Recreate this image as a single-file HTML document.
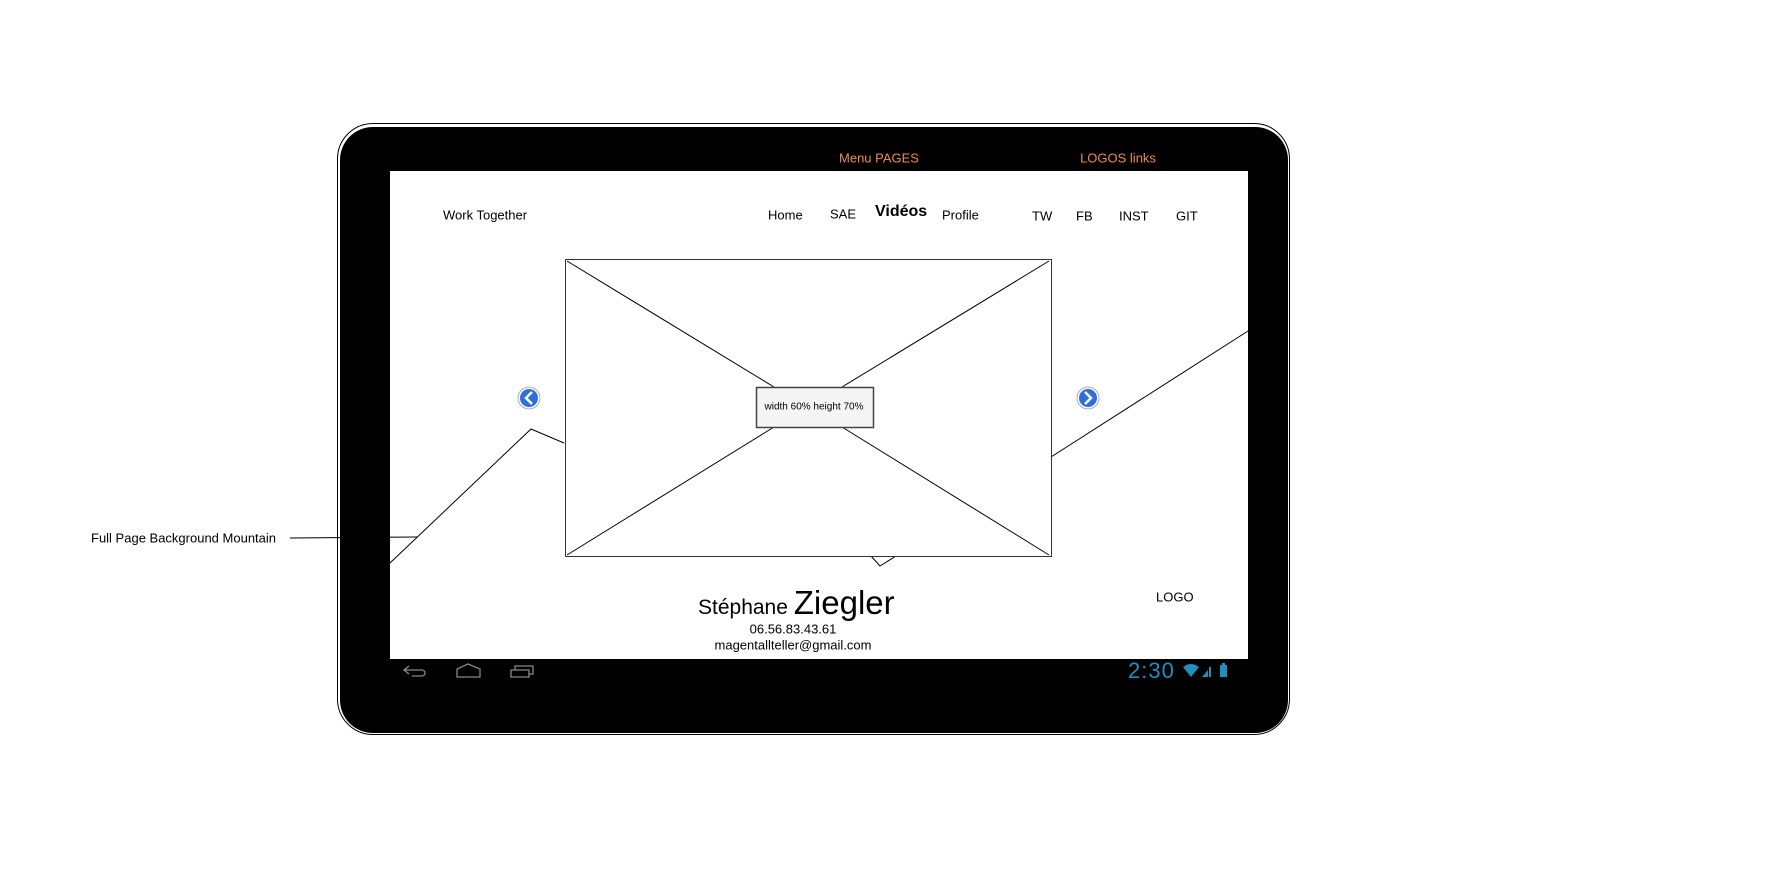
<!DOCTYPE html>
<html><head><meta charset="utf-8"><style>
body{margin:0;width:1790px;height:892px;background:#fff;position:relative;overflow:hidden;font-family:"Liberation Sans",sans-serif;}
.t{position:absolute;white-space:nowrap;font-size:13px;color:#000;transform:translateY(-50%);}
.c{transform:translate(-50%,-50%);}
</style></head><body>
<div style="position:absolute;left:337px;top:123px;width:951px;height:610px;border:1px solid #000;border-radius:36px;"></div>
<div style="position:absolute;left:340px;top:127px;width:948px;height:606px;background:#000;border-radius:33px;"></div>
<div style="position:absolute;left:390px;top:171px;width:858px;height:488px;background:#fff;"></div>
<svg width="1790" height="892" style="position:absolute;left:0;top:0">
<g fill="none" stroke="#000" stroke-width="1">
<polyline points="390,563 531,429 564,443"/>
<polyline points="1051,457 1248,331"/>
<polyline points="871,556 880,566 896,556"/>
<polyline points="290,538 417,537"/>
<rect x="565.5" y="259.5" width="486" height="297" fill="#fff" stroke="#333"/>
<line x1="567" y1="261" x2="774" y2="387"/>
<line x1="1049" y1="261" x2="842" y2="387"/>
<line x1="567" y1="555" x2="774" y2="427"/>
<line x1="1049" y1="555" x2="842" y2="427"/>
<rect x="756.5" y="387.5" width="117" height="40" fill="#f5f5f5" stroke="#444" stroke-width="1.5"/>
</g>
<g>
<circle cx="529" cy="398" r="11" fill="#fff" stroke="#aac" />
<circle cx="529" cy="398" r="9" fill="#2f6fd8"/>
<path d="M532,392 L526,398 L532,404" fill="none" stroke="#fff" stroke-width="2.5"/>
<circle cx="1088" cy="398" r="11" fill="#fff" stroke="#aac"/>
<circle cx="1088" cy="398" r="9" fill="#2f6fd8"/>
<path d="M1085,392 L1091,398 L1085,404" fill="none" stroke="#fff" stroke-width="2.5"/>
</g>
<g fill="none" stroke="#888" stroke-width="1.3">
<path d="M409,666 L404,670 L409,674 M404,670 L421,670 Q425,670 425,673 Q425,676 421,676 L412,676"/>
<path d="M457,677 L457,669 L468,664 L480,669 L480,677 Z"/>
<path d="M511,670 L529,670 L529,677 L511,677 Z M515,670 L515,666 L533,666 L533,674 L529,674"/>
</g>
<g fill="#1f8fbf">
<path d="M1183,667 Q1191,661 1199,667 L1191,677 Z"/>
<path d="M1202,677 L1208,670 L1208,677 Z"/>
<rect x="1209" y="667" width="2" height="10"/>
<rect x="1220" y="665" width="7" height="12"/><rect x="1222" y="663" width="3" height="2"/>
</g>
</svg>
<div class="t c" style="left:879px;top:158px;color:#f08a4b;">Menu PAGES</div>
<div class="t c" style="left:1118px;top:158px;color:#f08a4b;">LOGOS links</div>
<div class="t" style="left:443px;top:215px;">Work Together</div>
<div class="t" style="left:768px;top:215px;">Home</div>
<div class="t" style="left:830px;top:214px;">SAE</div>
<div class="t" style="left:875px;top:212px;font-size:16px;font-weight:bold;">Vidéos</div>
<div class="t" style="left:942px;top:215px;">Profile</div>
<div class="t" style="left:1032px;top:216px;">TW</div>
<div class="t" style="left:1076px;top:216px;">FB</div>
<div class="t" style="left:1119px;top:216px;">INST</div>
<div class="t" style="left:1176px;top:216px;">GIT</div>
<div class="t c" style="left:814px;top:407px;font-size:10px;">width 60% height 70%</div>
<div class="t" style="left:91px;top:538px;">Full Page Background Mountain</div>
<div class="t" style="left:698px;top:603px;font-size:21px;">Stéphane <span style="font-size:33px;">Ziegler</span></div>
<div class="t c" style="left:793px;top:629px;">06.56.83.43.61</div>
<div class="t c" style="left:793px;top:645px;">magentallteller@gmail.com</div>
<div class="t" style="left:1156px;top:597px;">LOGO</div>
<div class="t" style="left:1128px;top:671px;font-size:22px;color:#1f8fbf;letter-spacing:1px;">2:30</div>
</body></html>
